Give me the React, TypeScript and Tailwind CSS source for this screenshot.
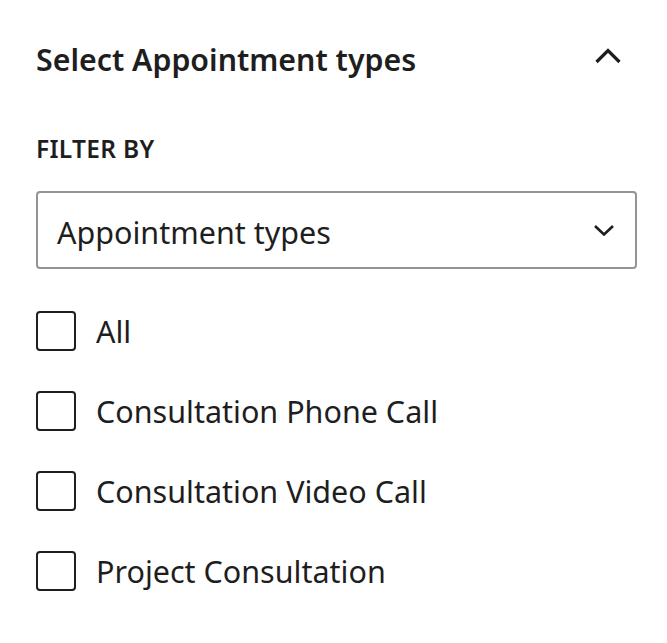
const options = ["All", "Consultation Phone Call", "Consultation Video Call", "Project Consultation"];

export default function App() {
  return (
    <div
      className="min-h-[643px] w-[667px] bg-white pl-[36px] pr-[30px] pt-[40px] text-[#1e1e1e]"
      style={{ fontFamily: '"Noto Sans", sans-serif' }}
    >
      <div className="flex items-start justify-between">
        <h2 className="text-[30.3px] font-semibold leading-[40px]">Select Appointment types</h2>
        <svg className="mr-[15px] mt-[8px]" width="28" height="16" viewBox="0 0 28 16" fill="none">
          <path d="M2.5 14 L14 2.5 L25.5 14" stroke="#1e1e1e" strokeWidth="3.2" />
        </svg>
      </div>

      <div className="mt-[54px] text-[24.5px] font-semibold uppercase leading-[30px] tracking-[0.3px]">Filter by</div>

      <div className="mt-[27px] flex h-[78px] items-center justify-between rounded-[4px] border-2 border-[#949494] pl-[19px] pr-[20px]">
        <span className="pt-[3px] text-[30.5px] leading-[40px]">Appointment types</span>
        <svg width="22" height="12" viewBox="0 0 22 12" fill="none">
          <path d="M2 2 L11 10.5 L20 2" stroke="#1e1e1e" strokeWidth="2.6" />
        </svg>
      </div>

      <div className="mt-[42px] flex flex-col gap-[40px]">
        {options.map((o) => (
          <label key={o} className="flex h-[40px] items-center gap-[20px]">
            <span className="box-border h-[40px] w-[40px] shrink-0 rounded-[4px] border-2 border-[#1e1e1e] bg-white" />
            <span className="text-[30.5px] leading-[40px]">{o}</span>
          </label>
        ))}
      </div>
    </div>
  );
}
